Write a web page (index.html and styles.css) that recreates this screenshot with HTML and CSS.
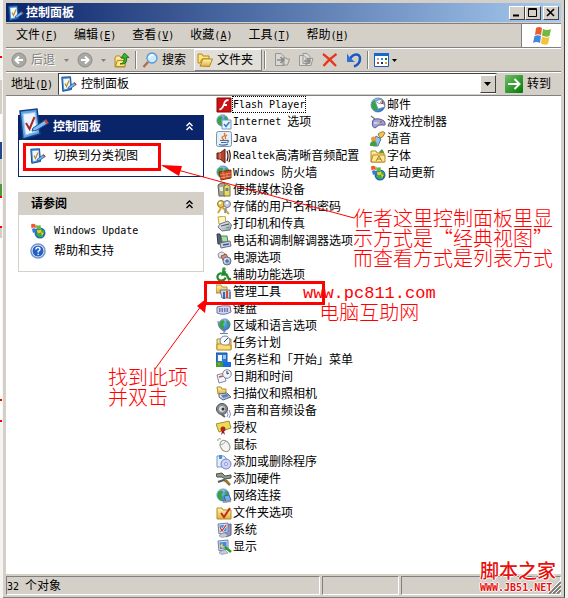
FILE: index.html
```html
<!DOCTYPE html>
<html lang="zh-CN">
<head>
  <meta charset="UTF-8">
  <meta name="viewport" content="width=device-width, initial-scale=1.0">
  <title>控制面板</title>
  <link rel="stylesheet" href="styles.css">
</head>
<body>

<!-- shared icons -->
<svg class="defs" aria-hidden="true">
  <defs>
    <linearGradient id="sky" x1="0" y1="0" x2="1" y2="1"><stop offset="0" stop-color="#b9e2ff"/><stop offset="1" stop-color="#1763c0"/></linearGradient>
    <linearGradient id="gold" x1="0" y1="0" x2="0" y2="1"><stop offset="0" stop-color="#fff6b8"/><stop offset="1" stop-color="#e2b13c"/></linearGradient>
    <linearGradient id="steel" x1="0" y1="0" x2="1" y2="1"><stop offset="0" stop-color="#ffffff"/><stop offset="1" stop-color="#8d97ad"/></linearGradient>
    <linearGradient id="go" x1="0" y1="0" x2="1" y2="1"><stop offset="0" stop-color="#6fc069"/><stop offset="1" stop-color="#007a00"/></linearGradient>
  </defs>
  <symbol id="panel" viewBox="0 0 16 16">
    <path d="M.8 1.200L9.500 .8L10.500 13.500L1.800 15.300Z" fill="#4b93dc" stroke="#164b8e"/>
    <path d="M2.300 3L8.500 2.600L9.300 12L3.200 13.200Z" fill="#f2f7ff"/>
    <path d="M4 7.500L5.500 10.500L8 4.500" fill="none" stroke="#b8912c" stroke-width="1.300"/>
    <path d="M7.500 11L13.500 6.500L15.300 8.500L9.500 12.500L7 12.800Z" fill="#6fb4ee" stroke="#1f4f8c" stroke-width=".7"/>
    <path d="M12.800 7L13.600 6.500L15.400 8.500L14.500 9.200Z" fill="#c83c28"/>
  </symbol>
  <symbol id="panel-big" viewBox="0 0 30 32">
    <path d="M1 3L18 1L21 26L4 31Z" fill="#5fa4e6" stroke="#123f80" stroke-width="1.500"/>
    <path d="M4 6L16 4.500L18 23.500L6.500 27Z" fill="#eef5ff" stroke="#a7c8ee"/>
    <path d="M7 15L10.500 21L15.500 9" fill="none" stroke="#a32a20" stroke-width="2"/>
    <path d="M14 20L27 11.500L29.500 15L17 22.500L13 23Z" fill="#7fbcf2" stroke="#1d5296"/>
    <path d="M25 12.800L27 11.500L29.500 15L27.500 16.200Z" fill="#d0452e"/>
  </symbol>
  <symbol id="globe" viewBox="0 0 16 16">
    <circle cx="8" cy="8" r="7" fill="url(#sky)" stroke="#1656a6" stroke-width=".6"/>
    <path d="M3 4C6 2 8 3 8 5L6 8L8 11L6 14C2 12 0 8 3 4ZM10 3L14 5L14 9L11 8Z" fill="#38a43c"/>
  </symbol>
  <symbol id="folder" viewBox="0 0 16 16">
    <path d="M1 4L2 2H6L7 4H13V7H15L13 14H1Z" fill="url(#gold)" stroke="#b58a22"/>
    <path d="M1.500 13.500L4 7.500H15L13 13.500Z" fill="#ffe783" stroke="#b58a22"/>
  </symbol>
  <symbol id="update" viewBox="0 0 16 16">
    <circle cx="10" cy="10" r="5.500" fill="#1c67c2"/>
    <path d="M7 9L11 6L15 8L12 11L13 14L9 14L6 12Z" fill="#3bae39"/>
    <path d="M11 9L14 10L12 13Z" fill="#f3c830"/>
    <path d="M1 1.500Q3 0 5.500 1.500L6 5Q3.500 4 1.500 5.500Z" fill="#ed5b2b"/>
    <path d="M6 2Q8 3 10.500 2L11 6Q9 7 6.500 6Z" fill="#63b843"/>
    <path d="M2 6Q4 4.500 6 6L7 10Q5 8.500 3 10Z" fill="#3178d8"/>
    <path d="M6.500 6.500Q8 8 11 6.500L11.500 9Q9 11 7.500 9.500Z" fill="#f5c62e"/>
  </symbol>
  <symbol id="monitor" viewBox="0 0 16 16">
    <path d="M2 2L12 1V10L3 12Z" fill="#d9dff0" stroke="#72809e"/>
    <path d="M3.500 3.500L10.500 2.800V9L4.200 10.200Z" fill="#3d8be0"/>
    <path d="M5 12L9 11L12 14L6 15.500L3 14Z" fill="#c6cbd9" stroke="#7f89a0" stroke-width=".6"/>
  </symbol>
  <symbol id="chevrons" viewBox="0 0 9 9">
    <path d="M1.500 4L4.500 1L7.500 4M1.500 8L4.500 5L7.500 8" fill="none" stroke="currentColor" stroke-width="1.400"/>
  </symbol>
  <symbol id="caret" viewBox="0 0 5 3"><path d="M0 0H5L2.500 3Z" fill="currentColor"/></symbol>
</svg>

<div class="window">
  <header class="titlebar">
    <svg class="icon"><use href="#panel"/></svg>
    <h1>控制面板</h1>
    <div class="caption-buttons">
      <button type="button" aria-label="最小化"><svg width="10" height="9"><path d="M1 7.500H7" stroke="#000" stroke-width="2"/></svg></button>
      <button type="button" aria-label="最大化"><svg width="10" height="9"><path d="M.5 .5H8.500V8.500H.5ZM0 1.500H9" fill="none" stroke="#000"/></svg></button>
      <button type="button" class="close" aria-label="关闭"><svg width="10" height="9"><path d="M1 1L8 8M8 1L1 8" stroke="#000" stroke-width="1.600"/></svg></button>
    </div>
  </header>

  <div class="menubar">
    <nav>
      <button type="button">文件<span class="en">(<u>F</u>)</span></button>
      <button type="button">编辑<span class="en">(<u>E</u>)</span></button>
      <button type="button">查看<span class="en">(<u>V</u>)</span></button>
      <button type="button">收藏<span class="en">(<u>A</u>)</span></button>
      <button type="button">工具<span class="en">(<u>T</u>)</span></button>
      <button type="button">帮助<span class="en">(<u>H</u>)</span></button>
    </nav>
    <div class="flag">
      <svg width="20" height="20" viewBox="0 0 20 20">
        <path d="M4 2Q7 0 10 2L9 9Q6 7.500 3 9Z" fill="#ed5b2b"/>
        <path d="M11 3Q15 5 19 3L17.500 10Q14 11.500 10 9.500Z" fill="#72b840"/>
        <path d="M2.500 10Q6 8.500 9 10L8 17Q4 15 1 17Z" fill="#4488dc"/>
        <path d="M10 10.500Q14 12.500 17.500 11L16 18Q12 19.500 9 17.500Z" fill="#f5c13a"/>
      </svg>
    </div>
  </div>

  <div class="toolbar">
    <button type="button" class="tool back" disabled>
      <svg class="icon"><circle cx="8" cy="8" r="7" fill="#a8a8a4" stroke="#8c8c88"/><path d="M12 8H5M8 4.500L4.500 8L8 11.500" fill="none" stroke="#fff" stroke-width="2"/></svg>
      <span>后退</span>
      <svg class="caret"><use href="#caret"/></svg>
    </button>
    <button type="button" class="tool forward" aria-label="前进" disabled>
      <svg class="icon"><circle cx="8" cy="8" r="7" fill="#a8a8a4" stroke="#8c8c88"/><path d="M4 8H11M8 4.500L11.500 8L8 11.500" fill="none" stroke="#fff" stroke-width="2"/></svg>
      <svg class="caret"><use href="#caret"/></svg>
    </button>
    <button type="button" class="tool" aria-label="向上">
      <svg class="icon"><path d="M1 6L2 4H6L7 6H11V15H1Z" fill="url(#gold)" stroke="#b58a22"/><path d="M1.500 14.500L3.500 8.500H12L10.500 14.500Z" fill="#ffe783" stroke="#b58a22"/><path d="M6 12Q11 11 10 6H7L10.500 1L15 5.500H12.500Q14 13 6 12Z" fill="#35b52c" stroke="#126512" stroke-width=".8"/></svg>
    </button>
    <span class="sep"></span>
    <button type="button" class="tool">
      <svg class="icon"><path d="M6 10L1.500 15" stroke="#b26b4b" stroke-width="2.500"/><circle cx="10" cy="6" r="5" fill="#c9ecff" stroke="#5b95d2" stroke-width="1.300"/><path d="M7 6Q8 3 11 3" stroke="#fff" fill="none" stroke-width="1.500"/></svg>
      <span>搜索</span>
    </button>
    <button type="button" class="tool pressed" aria-pressed="true">
      <svg class="icon"><path d="M1 2H5L6 4H12V7H5L3 11H1Z" fill="#ffe47a" stroke="#b5851a"/><path d="M3 14L6 7H15.500L12.500 14.500Z" fill="url(#gold)" stroke="#b5851a"/></svg>
      <span>文件夹</span>
    </button>
    <span class="sep tight"></span>
    <button type="button" class="tool spaced" aria-label="移至" disabled>
      <svg class="icon"><path d="M1.500 1.500H7L10 4.500V13.500H1.500ZM9 6H12L13 7H15.500L13.500 13H9Z" fill="#d8d8d4" stroke="#949490"/><path d="M3 8H9M6.500 5L9.500 8L6.500 11" fill="none" stroke="#888" stroke-width="1.600"/></svg>
    </button>
    <button type="button" class="tool spaced" aria-label="复制到" disabled>
      <svg class="icon"><path d="M1.500 3.500H6L8 5.500V13.500H1.500ZM5 1.500H9L12 4.500V11.500H5ZM10 6.500H15L13 13.500H8Z" fill="#deded9" stroke="#989894"/><path d="M6 9H11M9 6L12 9L9 12" fill="none" stroke="#8e8e8a" stroke-width="1.500"/></svg>
    </button>
    <button type="button" class="tool spaced" aria-label="删除">
      <svg class="icon"><path d="M1 2Q8 7 14 14M14.500 2Q7 7 1.500 14" fill="none" stroke="#e8361c" stroke-width="2.200"/></svg>
    </button>
    <button type="button" class="tool spaced" aria-label="撤消">
      <svg class="icon"><path d="M4 7C7 1 14 1 14 6.500C14 10 12 13 8 14.500" fill="none" stroke="#1b57c0" stroke-width="2.500"/><path d="M1 1.500V10H9L6 7.500L3.500 5Z" fill="#2c70d8"/></svg>
    </button>
    <span class="sep"></span>
    <button type="button" class="tool views" aria-label="查看方式">
      <svg class="icon"><path d="M.5 1.500H14.500V14.500H.5Z" fill="#fff" stroke="#145dc0"/><path d="M0 1H15V4H0Z" fill="#1666d2"/><path d="M3 6h2v2h-2z" fill="#9aa9cc"/><path d="M7 6h2v2h-2z" fill="#4b79cf"/><path d="M11 6h2v2h-2z" fill="#16821c"/><path d="M3 10h2v2h-2z" fill="#d0482c"/><path d="M7 10h2v2h-2z" fill="#0d328c"/><path d="M11 10h2v2h-2z" fill="#d89c31"/></svg>
      <svg class="caret"><use href="#caret"/></svg>
    </button>
  </div>

  <div class="addressbar">
    <label for="address">地址<span class="en">(<u>D</u>)</span></label>
    <div class="combo">
      <svg class="icon"><use href="#panel"/></svg>
      <select id="address"><option>控制面板</option></select>
      <span class="drop"><svg width="7" height="4"><path d="M0 0H7L3.500 4Z"/></svg></span>
    </div>
    <button type="button" class="go">
      <svg width="18" height="18"><rect width="18" height="18" rx="1" fill="url(#go)"/><path d="M3 9H14M9.500 4L14.500 9L9.500 14" fill="none" stroke="#fff" stroke-width="2"/></svg>
      <span>转到</span>
    </button>
  </div>

  <main class="content">
    <aside>
      <section class="card primary">
        <h2>
          <svg class="big"><use href="#panel-big"/></svg>
          控制面板
          <svg class="chev"><use href="#chevrons"/></svg>
        </h2>
        <ul>
          <li><a href="#"><svg class="icon"><use href="#panel"/></svg>切换到分类视图</a></li>
        </ul>
      </section>
      <section class="card">
        <h2>请参阅 <svg class="chev"><use href="#chevrons"/></svg></h2>
        <ul>
          <li><a href="#"><svg class="icon"><use href="#update"/></svg><span class="en">Windows Update</span></a></li>
          <li><a href="#"><svg class="icon"><circle cx="8" cy="8" r="7" fill="#edf4ff" stroke="#7595cb" stroke-width="1.500"/><circle cx="8" cy="8" r="5.500" fill="#245fc5"/><path d="M5.800 6.500Q6 4.500 8 4.500Q10 4.500 10 6.300Q10 7.500 8.200 8.300V9.500M8.200 10.700V12" fill="none" stroke="#fff" stroke-width="1.400"/></svg>帮助和支持</a></li>
        </ul>
      </section>
    </aside>

    <ul class="items">
      <li><svg class="icon"><path d="M1 1H15V15H1Z" fill="#ca1116" stroke="#8e080b"/><path d="M12.500 3Q9 3 8 7Q6.500 12 3.500 12.500M7.500 8H11" fill="none" stroke="#fff" stroke-width="1.800"/></svg><span class="en focus">Flash Player</span></li>
      <li><svg class="icon"><use href="#globe" width="13" height="13"/><path d="M6 6H15V15H6Z" fill="#e9f4ff" stroke="#7b95b8"/><path d="M8 10L10 12.500L13.500 8" fill="none" stroke="#2b80cc" stroke-width="1.500"/></svg><span class="en">Internet </span>选项</li>
      <li><svg class="icon"><rect x=".5" y=".5" width="15" height="15" rx="2" fill="#e6eef6" stroke="#7c93ac"/><path d="M8 9Q4 6 8 5Q10 4 8 2M10 8Q8 6 11 4" fill="none" stroke="#e36c1b" stroke-width="1.200"/><path d="M4 9.500H11Q13 9 12 11L10.500 11.500M5 11.500H10M3 13.500Q8 15 12 13" fill="none" stroke="#3b6ea1" stroke-width="1.200"/></svg><span class="en">Java</span></li>
      <li><svg class="icon"><path d="M1 5H4L9 1V15L4 11H1Z" fill="#b5442d" stroke="#5b1b10"/><path d="M4 5V11" stroke="#ec9e7d"/><path d="M11 3Q13 8 11 13M13 2Q15.500 8 13 14" fill="none" stroke="#3c1713" stroke-width="1.200"/></svg><span class="en">Realtek</span>高清晰音频配置</li>
      <li><svg class="icon"><use href="#globe" width="14" height="14"/><path d="M3 7L15 5V13L5 15Z" fill="#c64b20" stroke="#84280d"/><path d="M4 10L15 8M4 13L15 11M7 6V9M11 9V12M8 10V14" stroke="#f0a06d" stroke-width=".8"/></svg><span class="en">Windows </span>防火墙</li>
      <li><svg class="icon"><path d="M2 3L5 1H9V14H3Z" fill="#a5a798" stroke="#5d5f53"/><path d="M3.500 5H7V9H4Z" fill="#e4eccb"/><path d="M8 4Q11 1 14 4V14H8Z" fill="#e8db65" stroke="#7d7430"/><path d="M9.500 6H12.500V9H9.500Z" fill="#687e9c"/></svg>便携媒体设备</li>
      <li><svg class="icon"><circle cx="5" cy="5" r="3.500" fill="#e8c54a" stroke="#927020"/><circle cx="4" cy="4" r="1.300" fill="#fff"/><path d="M5 9L2 14M6 8L13 15" stroke="#d6a72b" stroke-width="2"/><circle cx="11" cy="5" r="3.500" fill="#c7ccd7" stroke="#707788"/><circle cx="11" cy="4" r="1.200" fill="#fff"/><path d="M10 9L9 14" stroke="#8b93a4" stroke-width="2"/></svg>存储的用户名和密码</li>
      <li><svg class="icon"><path d="M2 1L9 0L10 7L3 8Z" fill="#fff6bf" stroke="#bfa34e"/><path d="M4 8L12 5L15.500 9L14 14L6 15L2 11Z" fill="url(#steel)" stroke="#6f788d"/><path d="M5 10L13 8" stroke="#464d60"/><path d="M10 12L14 11" stroke="#46ae3e"/></svg>打印机和传真</li>
      <li><svg class="icon"><path d="M1 1H4L6 11H2Z" fill="#5d6175" stroke="#303442"/><path d="M5 3H11L12 9H6Z" fill="#aadcaa" stroke="#4b814e"/><path d="M4 10L14 8L15 13L5 15Z" fill="#cdd1dc" stroke="#686d80"/><path d="M7 12L13 11" stroke="#3559a8" stroke-width="1.500"/></svg>电话和调制解调器选项</li>
      <li><svg class="icon"><path d="M2 4Q6 0 9 4L7 8H3Z" fill="#e1e5ee" stroke="#8b90a0"/><path d="M5 6L10 4L13 9L8 12Z" fill="#df8b70" stroke="#96503f"/><circle cx="11" cy="11" r="4" fill="url(#steel)" stroke="#5c6f9b"/><path d="M9 11H13M11 9V13" stroke="#2859a8"/></svg>电源选项</li>
      <li><svg class="icon"><path d="M8 1.500L6.500 7.500H10.500L13 12.500L15 11.500M5.500 6Q1 7 1.500 10.500Q2.500 14 6 13.500Q9 13 9.500 10.500M6.500 4.500L10 5.500" fill="none" stroke="#238c2e" stroke-width="2.300"/><circle cx="8" cy="2" r="1.800" fill="#2fa23a"/></svg>辅助功能选项</li>
      <li><svg class="icon"><path d="M0 1H5L6 3H11V9H0Z" fill="url(#gold)" stroke="#b58a22"/><path d="M4 6H14V14H6Z" fill="#d4d8e5" stroke="#667088"/><path d="M7 8H9V15H7Z" fill="#3667bd"/><path d="M10 7H12V14H10Z" fill="#d64e28"/><path d="M13 8H15V15H13Z" fill="#7d889f"/></svg>管理工具</li>
      <li><svg class="icon"><path d="M1 6Q7 4 14 5L15 11Q8 15 1 12Z" fill="#d2d6ec" stroke="#6c74a1"/><path d="M3 8H13M3 10H13" stroke="#575f9d" stroke-width="1.300" stroke-dasharray="1.500 1"/></svg>键盘</li>
      <li><svg class="icon"><use href="#globe" x="2" width="13" height="13"/><path d="M2 3Q2 12 10 13M8 13V15M4 15.500H12" fill="none" stroke="#7280a1" stroke-width="1.200"/></svg>区域和语言选项</li>
      <li><svg class="icon"><path d="M1 4H15V14H1Z" fill="url(#gold)" stroke="#b58a22"/><circle cx="9" cy="6" r="5" fill="#f5f9ff" stroke="#7084a2"/><path d="M8 7L12 3" fill="none" stroke="#32435f"/><path d="M1 9H6L7 10H15V15H1Z" fill="#f8dc80" stroke="#b58a22"/></svg>任务计划</li>
      <li><svg class="icon"><path d="M0 1H11V11H0Z" fill="#2e78d0" stroke="#1553a0"/><path d="M2 3H6V9H2Z" fill="#f3f7ff"/><path d="M7 3H10V7H7Z" fill="#95c4f5"/><path d="M0 10H15V15H0Z" fill="#1a69dd"/><path d="M0 10H7V15H0Z" fill="#38a332"/><path d="M2 11H4V13H2Z" fill="#f07730"/></svg>任务栏和「开始」菜单</li>
      <li><svg class="icon"><path d="M1 6L8 4L10 12L3 14Z" fill="#f2f5fc" stroke="#7c88a8"/><path d="M3 8L7 7" stroke="#d44f3a" stroke-width="1.500"/><circle cx="11" cy="5" r="4.300" fill="#eef5ff" stroke="#7c8495"/><path d="M11 2V5L13 4" fill="none" stroke="#334"/></svg>日期和时间</li>
      <li><svg class="icon"><path d="M1 1H5L6 3H10V8H2Z" fill="url(#gold)" stroke="#b58a22"/><path d="M3 8L11 7L15 11L7 14L3 11Z" fill="url(#steel)" stroke="#5c6680"/><path d="M5 9L11 8L13 10L7 12Z" fill="#5187be"/></svg>扫描仪和照相机</li>
      <li><svg class="icon"><circle cx="6" cy="6" r="5.500" fill="#8a8d95" stroke="#4b4d55"/><circle cx="6" cy="6" r="3" fill="#d8dbe2"/><circle cx="7" cy="6" r="1.500" fill="#333"/><path d="M5 11L9 14" stroke="#666" stroke-width="2"/><path d="M11 9Q13 11 11 14M13 7Q16 11 13 15" fill="none" stroke="#7f91cb"/></svg>声音和音频设备</li>
      <li><svg class="icon"><path d="M0 4L13 1L15 8L3 12Z" fill="#eadb58" stroke="#a49325"/><circle cx="7" cy="9" r="2.500" fill="#b72020"/><path d="M6 11L5 15L7 13L9 15L8 11Z" fill="#912020"/></svg>授权</li>
      <li><svg class="icon"><path d="M2 4Q1 1 5 2" fill="none" stroke="#9a9a9a"/><ellipse cx="9" cy="9" rx="4.500" ry="6" transform="rotate(-32 9 9)" fill="#f4f4f1" stroke="#96968f"/><path d="M3 8Q8 8 10 4" fill="none" stroke="#aaa"/></svg>鼠标</li>
      <li><svg class="icon"><path d="M1 2H8L10 4V13H1Z" fill="#e6f0fd" stroke="#7496c4"/><path d="M3 1H6V5H3Z" fill="#4d91d9"/><circle cx="10" cy="10" r="5" fill="#cbd3fa" stroke="#7380bf"/><circle cx="10" cy="10" r="1.500" fill="#fff" stroke="#8d96c4"/></svg>添加或删除程序</li>
      <li><svg class="icon"><path d="M0 3L6 2L9 5L15 4V7L9 8L6 6L1 6Z" fill="#8e9b94" stroke="#48534c"/><path d="M2 11L8 9L12 11" fill="none" stroke="#56605a" stroke-width="2.200"/><path d="M9 9L14 14" stroke="#9b6e31" stroke-width="2.500"/></svg>添加硬件</li>
      <li><svg class="icon"><use href="#globe" width="14" height="14"/><path d="M8 8L13 7L15 12L10 14Z" fill="#70aee9" stroke="#46668f"/><path d="M7 14L15 13" stroke="#9098a8" stroke-width="2"/></svg>网络连接</li>
      <li><svg class="icon"><path d="M1 3H6L7 5H15V14H1Z" fill="url(#gold)" stroke="#b58a22"/><path d="M5 8L8 12L14 3" fill="none" stroke="#c52818" stroke-width="2"/></svg>文件夹选项</li>
      <li><svg class="icon"><path d="M9 3L15 2V13L10 15Z" fill="#9297b9" stroke="#5d6388"/><use href="#monitor"/><path d="M4 5L6 9L10 3" fill="none" stroke="#fff" stroke-width="2.400"/><path d="M4 5L6 9L10 3" fill="none" stroke="#c63428" stroke-width="1.300"/></svg>系统</li>
      <li><svg class="icon"><use href="#monitor"/><path d="M4 7L6 4L7 7L10 8L6 9Z" fill="#f3cc51"/><path d="M9 8L15 13" stroke="#329a2b" stroke-width="2.500"/></svg>显示</li>
    </ul>

    <ul class="items">
      <li><svg class="icon"><use href="#globe"/><path d="M5 4L12 2L15 10L8 12Z" fill="#fff" stroke="#7890b0"/><path d="M12 4H13V7H11Z" fill="#c9362a"/><path d="M5 4L10 7L12 2" fill="none" stroke="#8aa0bd"/></svg>邮件</li>
      <li><svg class="icon"><path d="M1 2L5 5" stroke="#777" stroke-width="1.300"/><path d="M3 6Q8 3 14 7Q17 12 13 11L9 11L5 14Q1 13 3 6Z" fill="#9da1dc" stroke="#545b9b"/><circle cx="11" cy="8" r="1" fill="#e74e30"/><circle cx="8" cy="9" r="1" fill="#f0cd3c"/><path d="M4 9H7" stroke="#fff"/></svg>游戏控制器</li>
      <li><svg class="icon"><path d="M8 3Q13 -1 15 2Q13 7 10 7Z" fill="#edc660" stroke="#a37c25"/><path d="M6 5L11 8L8 15H3Z" fill="#9dbde6" stroke="#567aab"/><circle cx="3.500" cy="8" r="2.500" fill="#e99745"/><path d="M0 14Q0 10 4 10Q7 10 7 15H0Z" fill="#42a03d"/></svg>语音</li>
      <li><svg class="icon"><path d="M9 4L12 1L14 4V7H10Z" fill="#4b9647"/><path d="M1 3H6L7 5H14V14H1Z" fill="url(#gold)" stroke="#b58a22"/><path d="M3 7H15V14H1Z" fill="#ffe995" stroke="#b58a22"/><path d="M6 13L9 8L12 13M7 11H11" fill="none" stroke="#a67b23"/></svg>字体</li>
      <li><svg class="icon"><use href="#update"/></svg>自动更新</li>
    </ul>

    <!-- red marks drawn over the window -->
    <div class="mark mark-switch"></div>
    <div class="mark mark-tools"></div>
    <svg class="arrows" width="556" height="479">
      <path d="M348 122L157 70M149 273L198 206" fill="none" stroke="#f00"/>
      <path d="M155 69L176 70L173 80ZM201 202L199 217L191 210Z" fill="#f00"/>
    </svg>
    <p class="note note-view">作者这里控制面板里显<br>示方式是“经典视图”<br>而查看方式是列表方式</p>
    <p class="note note-find">找到此项<br>并双击</p>
    <p class="note note-site"><span class="en">www.pc811.com</span><br>电脑互助网</p>
  </main>

  <footer class="statusbar">
    <span class="cell count"><span class="en">32 </span>个对象</span>
    <span class="cell zone"></span>
    <span class="cell place"></span>
    <svg class="grip" width="13" height="13"><path d="M1 13L13 1M5 13L13 5M9 13L13 9" stroke="#7f7c74" stroke-width="2"/><path d="M0 12L12 0M4 12L13 3M8 12L13 7" stroke="#fff"/></svg>
    <div class="watermark"><b>脚本之家</b><span>WWW.JB51.NET</span></div>
  </footer>
</div>

</body>
</html>
```

FILE: styles.css
```css
* {
  box-sizing: border-box;
}

body {
  margin: 0;
  padding: 0 3px;
  height: 100vh;
  overflow: hidden;
  font: 12px/16px "Liberation Sans", "Noto Sans CJK SC", sans-serif;
  color: #000;
  /* edge of the window behind */
  background:
    linear-gradient(
      #f4f5f1 0 56px, #f00 56px 58px, #f4f5f1 58px 80px,
      #d4d0c8 80px 114px, #fff 114px 142px, #23478c 142px 159px,
      #d4d0c8 159px 184px, #4b9b3c 184px 196px, #f00 196px 198px,
      #fff 198px 226px, #f00 226px 228px, #d4d0c8 228px 238px,
      #fff 238px 399px, #f00 399px 401px, #fff 401px 420px,
      #f00 420px 422px, #f4f5f1 422px
    ) 0 0 / 2px 100% no-repeat,
    #f4f5f1;
}

ul, h1, h2, p {
  margin: 0;
  padding: 0;
  list-style: none;
}

button, select {
  margin: 0;
  padding: 0;
  border: 0;
  background: none;
  font: inherit;
  color: inherit;
}

a {
  color: inherit;
  text-decoration: none;
}

svg {
  flex: none;
}

.defs {
  position: absolute;
  width: 0;
  height: 0;
}

.icon {
  width: 16px;
  height: 16px;
}

.en {
  font-family: "DejaVu Sans Mono", monospace;
  font-size: 10px;
  white-space: pre;
}

.window {
  display: flex;
  flex-direction: column;
  height: 100%;
  padding: 3px 3px 2px;
  background: #d4d0c8;
  border-right: 1px solid #404040;
  border-bottom: 1px solid #808080;
}

/* title bar */
.titlebar {
  display: flex;
  align-items: center;
  height: 19px;
  padding: 0 2px;
  background: linear-gradient(90deg, #0a246a, #a6caf0);
  color: #fff;
}

.titlebar h1 {
  flex: 1;
  margin-left: 2px;
  font-size: 12px;
}

.caption-buttons {
  display: flex;
}

.caption-buttons button {
  display: flex;
  align-items: center;
  justify-content: center;
  width: 16px;
  height: 14px;
  background: #d4d0c8;
  border: 1px solid;
  border-color: #fff #404040 #404040 #fff;
}

.caption-buttons .close {
  margin-left: 2px;
}

/* menu, tool and address bars */
.menubar {
  display: flex;
  height: 25px;
  margin-top: 1px;
  border-top: 1px solid #808080;
  border-bottom: 1px solid #808080;
}

.menubar nav {
  flex: 1;
  display: flex;
  padding-left: 2px;
}

.menubar button {
  padding: 0 8px;
}

.flag {
  display: flex;
  align-items: center;
  justify-content: center;
  width: 40px;
  background: #fff;
  border-left: 1px solid #808080;
}

.toolbar {
  display: flex;
  align-items: center;
  height: 24px;
  padding-left: 5px;
  border-top: 1px solid #fff;
  border-bottom: 1px solid #808080;
}

.tool {
  display: flex;
  align-items: center;
  gap: 4px;
  height: 22px;
}

.tool:disabled {
  color: #808080;
  text-shadow: 1px 1px #fff;
}

.caret {
  width: 5px;
  height: 3px;
}

.back .caret {
  margin: 0 8px 0 5px;
}

.forward {
  margin-right: 8px;
}

.forward .caret {
  margin-left: 4px;
}

.sep {
  width: 2px;
  height: 18px;
  margin: 0 5px;
  border-left: 1px solid #808080;
  border-right: 1px solid #fff;
}

.sep.tight {
  margin: 0 0 0 2px;
}

.pressed {
  margin-left: 8px;
  padding: 0 8px 0 2px;
  background: #e2dfd9;
  border: 1px solid;
  border-color: #fff #808080 #808080 #fff;
}

.spaced {
  margin-left: 8px;
}

.views {
  gap: 2px;
}

.addressbar {
  display: flex;
  align-items: center;
  height: 24px;
  padding-left: 5px;
  border-top: 1px solid #fff;
  border-bottom: 1px solid #808080;
}

.combo {
  flex: 1;
  display: flex;
  align-items: center;
  height: 22px;
  margin-left: 5px;
  padding-left: 2px;
  background: #fff;
  border: 1px solid;
  border-color: #404040 #d4d0c8 #d4d0c8 #404040;
}

.combo select {
  flex: 1;
  height: 18px;
  margin-left: 4px;
  appearance: none;
  outline: 0;
}

.drop {
  display: flex;
  align-items: center;
  justify-content: center;
  width: 16px;
  height: 18px;
  background: #d4d0c8;
  border: 1px solid;
  border-color: #fff #404040 #404040 #fff;
}

.go {
  display: flex;
  align-items: center;
  gap: 4px;
  margin: 0 10px 0 8px;
}

/* content */
.content {
  position: relative;
  flex: 1;
  display: flex;
  min-height: 0;
  background: #fff;
}

aside {
  width: 186px;
  margin: 19px 12px 0;
}

.card {
  margin-bottom: 15px;
  border: 1px solid #d4d0c8;
}

.card h2 {
  display: flex;
  align-items: center;
  height: 22px;
  padding: 0 9px 0 12px;
  background: #d4d0c8;
  font-size: 12px;
}

.card ul {
  padding: 7px 11px 11px;
}

.card a {
  display: flex;
  align-items: center;
  gap: 8px;
  height: 18px;
}

.card li + li {
  margin-top: 2px;
}

.primary {
  border-color: #0a246a;
}

.primary h2 {
  align-items: flex-end;
  height: 24px;
  padding-left: 0;
  padding-bottom: 5px;
  background: #0a246a;
  color: #fff;
}

.big {
  width: 30px;
  height: 32px;
  margin: 0 4px -5px 0;
}

.chev {
  width: 9px;
  height: 9px;
  margin-left: auto;
}

.primary .chev {
  margin-bottom: 4px;
}

.items {
  width: 154px;
  white-space: nowrap;
}

.items li {
  display: flex;
  align-items: center;
  height: 17px;
}

.items .icon {
  margin-right: 1px;
}

.items .en {
  line-height: 15px;
}

.focus {
  outline: 1px dotted #000;
}

/* red marks */
.mark {
  position: absolute;
  border: 3px solid #f00;
}

.mark-switch {
  top: 47px;
  left: 17px;
  width: 138px;
  height: 28px;
}

.mark-tools {
  top: 185px;
  left: 198px;
  width: 121px;
  height: 24px;
}

.arrows {
  position: absolute;
  top: 0;
  left: 0;
}

.note {
  position: absolute;
  font-size: 20px;
  font-weight: 300;
  line-height: 20px;
  font-family: "Noto Sans CJK SC", sans-serif;
  color: #f00;
  white-space: nowrap;
}

.note .en {
  font-family: "Liberation Mono", monospace;
  font-size: 17px;
  line-height: 17px;
}

.note-view {
  top: 112px;
  left: 347px;
}

.note-find {
  top: 271px;
  left: 102px;
}

.note-site {
  top: 184px;
  left: 297px;
  text-align: center;
}

/* status bar */
.statusbar {
  position: relative;
  display: flex;
  gap: 2px;
  height: 21px;
  padding-top: 2px;
  line-height: 18px;
}

.cell {
  border: 1px solid;
  border-color: #808080 #fff #fff #808080;
}

.count {
  flex: 1;
}

.zone {
  width: 77px;
}

.place {
  width: 160px;
}

.grip {
  position: absolute;
  right: 0;
  bottom: 1px;
}

.watermark {
  position: absolute;
  right: 5px;
  bottom: 2px;
  display: flex;
  flex-direction: column;
  color: #e8100c;
  text-shadow: 1px 0 #fff, -1px 0 #fff, 0 1px #fff, 0 -1px #fff;
}

.watermark b {
  font-size: 19px;
  font-weight: 500;
  line-height: 20px;
}

.watermark span {
  font: bold 10px/11px "DejaVu Sans Mono", monospace;
}
```
